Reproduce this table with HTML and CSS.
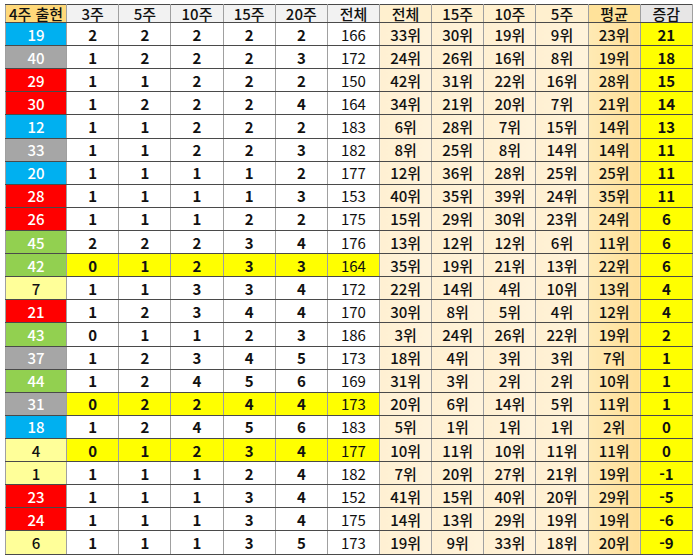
FILE: index.html
```html
<!DOCTYPE html>
<html lang="ko">
<head>
<meta charset="utf-8">
<title>4주 출현</title>
<link rel="stylesheet" href="styles.css">
</head>
<body>
<div class="wrap">
<table class="grid">
<colgroup>
<col class="c-first"><col class="c"><col class="c"><col class="c"><col class="c"><col class="c"><col class="c"><col class="c"><col class="c"><col class="c"><col class="c"><col class="c"><col class="c">
</colgroup>
<thead>
<tr>
<th class="h-first">4주 출현</th>
<th class="h-gray">3주</th><th class="h-gray">5주</th><th class="h-gray sep">10주</th><th class="h-gray">15주</th><th class="h-gray">20주</th><th class="h-gray">전체</th>
<th class="h-rank">전체</th><th class="h-rank">15주</th><th class="h-rank">10주</th><th class="h-rank">5주</th><th class="h-avg">평균</th><th class="h-diff">증감</th>
</tr>
</thead>
<tbody id="body"></tbody>
</table>
</div>
<script src="app.js"></script>
</body>
</html>
```
FILE: app.js
```js
var rows = [
[19,[2,2,2,2,2],166,[33,30,19,9,23],21,0],
[40,[1,2,2,2,3],172,[24,26,16,8,19],18,0],
[29,[1,1,2,2,2],150,[42,31,22,16,28],15,0],
[30,[1,2,2,2,4],164,[34,21,20,7,21],14,0],
[12,[1,1,2,2,2],183,[6,28,7,15,14],13,0],
[33,[1,1,2,2,3],182,[8,25,8,14,14],11,0],
[20,[1,1,1,1,2],177,[12,36,28,25,25],11,0],
[28,[1,1,1,1,3],153,[40,35,39,24,35],11,0],
[26,[1,1,1,2,2],175,[15,29,30,23,24],6,0],
[45,[2,2,2,3,4],176,[13,12,12,6,11],6,0],
[42,[0,1,2,3,3],164,[35,19,21,13,22],6,1],
[7,[1,1,3,3,4],172,[22,14,4,10,13],4,0],
[21,[1,2,3,4,4],170,[30,8,5,4,12],4,0],
[43,[0,1,1,2,3],186,[3,24,26,22,19],2,0],
[37,[1,2,3,4,5],173,[18,4,3,3,7],1,0],
[44,[1,2,4,5,6],169,[31,3,2,2,10],1,0],
[31,[0,2,2,4,4],173,[20,6,14,5,11],1,1],
[18,[1,2,4,5,6],183,[5,1,1,1,2],0,0],
[4,[0,1,2,3,4],177,[10,11,10,11,11],0,1],
[1,[1,1,1,2,4],182,[7,20,27,21,19],-1,0],
[23,[1,1,1,3,4],152,[41,15,40,20,29],-5,0],
[24,[1,1,1,3,4],175,[14,13,29,19,19],-6,0],
[6,[1,1,1,3,5],173,[19,9,33,18,20],-9,0]
];
function ball(n){
  if(n<=10) return 'b-yel';
  if(n<=20) return 'b-blue';
  if(n<=30) return 'b-red';
  if(n<=40) return 'b-gray';
  return 'b-green';
}
var html = '';
rows.forEach(function(r){
  var hl = r[5] ? ' hl' : '';
  html += '<tr>';
  html += '<td class="first ' + ball(r[0]) + '">' + r[0] + '</td>';
  r[1].forEach(function(v,i){
    html += '<td class="num' + hl + (i===2?' sep':'') + '">' + v + '</td>';
  });
  html += '<td class="tot' + hl + '">' + r[2] + '</td>';
  r[3].forEach(function(v,i){
    html += '<td class="' + (i===4?'avg':'rank') + '">' + v + '위</td>';
  });
  html += '<td class="diff">' + r[4] + '</td>';
  html += '</tr>';
});
document.getElementById('body').innerHTML = html;
```
FILE: styles.css
```css
html, body { margin: 0; padding: 0; background: #fff; }
.wrap { padding: 4px 0 0 5px; }
.grid {
  border-collapse: collapse;
  table-layout: fixed;
  width: 688px;
  font-family: "Noto Sans CJK KR", "Noto Sans", sans-serif;
  font-size: 15px;
  color: #111;
  border: 1px solid #333;
}
.c-first { width: 61px; }
.c { width: 52px; }
th, td {
  padding: 0;
  text-align: center;
  vertical-align: middle;
  border-top: 1px solid #4a4a4a;
  border-bottom: 1px solid #4a4a4a;
  border-left: 1px solid #a0a0a0;
  border-right: 1px solid #a0a0a0;
  line-height: 1;
  white-space: nowrap;
}
th { height: 17px; font-weight: 500; }
td { height: 22.12px; }
.sep { border-left: 1px solid #222; }
.h-first { background: #ffd97a; }
.h-gray { background: #f2f2f2; }
.h-rank { background: #fff0cf; }
.h-avg { background: #ffe29a; }
.h-diff { background: #e7e6e6; border-left: 1px solid #333; }
.first { font-weight: 500; color: #fff; }
.b-yel { background: #ffff99; color: #111; }
.b-blue { background: #00b0f0; }
.b-red { background: #ff0000; }
.b-gray { background: #a6a6a6; }
.b-green { background: #92d050; }
.num { font-weight: 700; }
.tot { font-weight: 400; }
.hl { background: #ffff00; }
.rank { background: linear-gradient(90deg, #fff0d2, #fff3dc); font-weight: 500; }
.avg { background: linear-gradient(90deg, #ffeab4, #ffdf98); font-weight: 500; }
.diff { background: #ffff00; font-weight: 700; border-left: 1px solid #333; }
```
